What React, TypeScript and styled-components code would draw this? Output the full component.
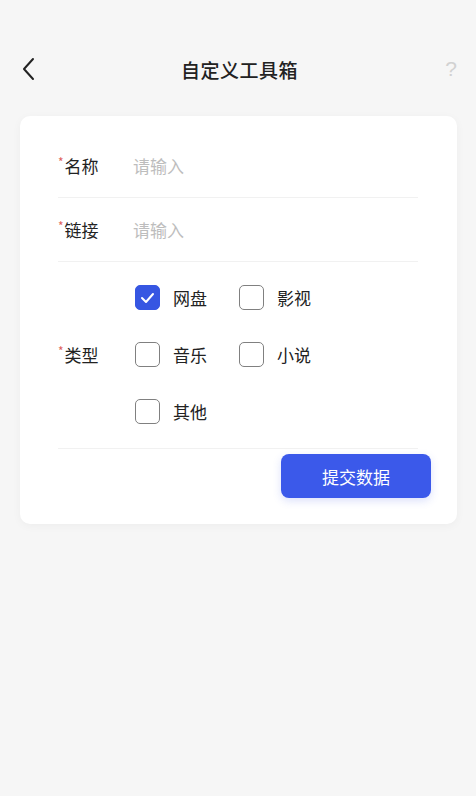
import React from "react";
import styled, { createGlobalStyle } from "styled-components";

const GlobalStyle = createGlobalStyle`
  html, body {
    margin: 0;
    padding: 0;
    background: #f6f6f6;
    font-family: "Noto Sans CJK SC", "Noto Sans", sans-serif;
  }
  * { box-sizing: border-box; }
`;

const Page = styled.div`
  width: 476px;
  min-height: 796px;
  background: #f6f6f6;
  padding-top: 40px;
`;

const Header = styled.div`
  height: 58px;
  display: flex;
  align-items: center;
  justify-content: space-between;
  padding: 0 13px 0 16px;
`;

const BackButton = styled.div`
  width: 24px;
  height: 24px;
  display: flex;
  align-items: center;
  justify-content: center;
`;

const Title = styled.div`
  font-size: 19px;
  font-weight: 500;
  color: #222;
  letter-spacing: 0.5px;
`;

const Help = styled.div`
  width: 24px;
  text-align: center;
  font-family: "Liberation Sans", sans-serif;
  font-size: 21px;
  color: #d2d2d2;
`;

const Card = styled.div`
  margin: 18px 19px 0 20px;
  background: #fff;
  border-radius: 10px;
  box-shadow: 0 2px 10px rgba(0, 0, 0, 0.04);
  padding: 18px 26px 26px 38px;
`;

const Row = styled.div<{ $tall?: boolean }>`
  display: flex;
  align-items: center;
  min-height: 64px;
  margin-right: 13px;
  border-bottom: 1px solid #f1f1f1;
  padding: ${(p) => (p.$tall ? "23px 0 24px" : "0")};
`;

const Label = styled.div`
  width: 75px;
  flex-shrink: 0;
  font-size: 17px;
  color: #222;
  display: flex;
  align-items: flex-start;
`;

const Star = styled.span`
  color: #e0615c;
  font-size: 12px;
  line-height: 12px;
  margin-top: 3px;
  margin-right: 1px;
`;

const Placeholder = styled.div`
  font-size: 17px;
  color: #bdbdbd;
`;

const OptionGrid = styled.div`
  display: grid;
  grid-template-columns: 104px 104px;
  row-gap: 32px;
  margin-left: 2px;
`;

const Option = styled.div`
  display: flex;
  align-items: center;
  gap: 13px;
  height: 25px;
`;

const Box = styled.div<{ $checked?: boolean }>`
  width: 25px;
  height: 25px;
  border-radius: 5px;
  border: 1.5px solid ${(p) => (p.$checked ? "#3656e2" : "#808080")};
  background: ${(p) => (p.$checked ? "#3656e2" : "#fff")};
  display: flex;
  align-items: center;
  justify-content: center;
`;

const OptionText = styled.span`
  font-size: 17px;
  color: #222;
`;

const Footer = styled.div`
  display: flex;
  justify-content: flex-end;
  padding-top: 5px;
`;

const SubmitButton = styled.button`
  width: 150px;
  height: 44px;
  border: none;
  border-radius: 8px;
  background: #3b59ea;
  color: #fff;
  font-family: "Noto Sans CJK SC", sans-serif;
  font-size: 17px;
  box-shadow: 0 3px 8px rgba(59, 89, 234, 0.18);
`;

const options = [
  { label: "网盘", checked: true },
  { label: "影视", checked: false },
  { label: "音乐", checked: false },
  { label: "小说", checked: false },
  { label: "其他", checked: false },
];

export default function App() {
  return (
    <Page>
      <GlobalStyle />
      <Header>
        <BackButton>
          <svg width="14" height="24" viewBox="0 0 14 24">
            <path d="M12 2 L3 12 L12 22" fill="none" stroke="#222" strokeWidth="2" strokeLinecap="round" strokeLinejoin="round" />
          </svg>
        </BackButton>
        <Title>自定义工具箱</Title>
        <Help>?</Help>
      </Header>
      <Card>
        <Row>
          <Label>
            <Star>*</Star>名称
          </Label>
          <Placeholder>请输入</Placeholder>
        </Row>
        <Row>
          <Label>
            <Star>*</Star>链接
          </Label>
          <Placeholder>请输入</Placeholder>
        </Row>
        <Row $tall>
          <Label>
            <Star>*</Star>类型
          </Label>
          <OptionGrid>
            {options.map((o) => (
              <Option key={o.label}>
                <Box $checked={o.checked}>
                  {o.checked && (
                    <svg width="15" height="12" viewBox="0 0 15 12">
                      <path d="M2 6 L6 10 L13 2" fill="none" stroke="#fff" strokeWidth="2" strokeLinecap="round" strokeLinejoin="round" />
                    </svg>
                  )}
                </Box>
                <OptionText>{o.label}</OptionText>
              </Option>
            ))}
          </OptionGrid>
        </Row>
        <Footer>
          <SubmitButton>提交数据</SubmitButton>
        </Footer>
      </Card>
    </Page>
  );
}
